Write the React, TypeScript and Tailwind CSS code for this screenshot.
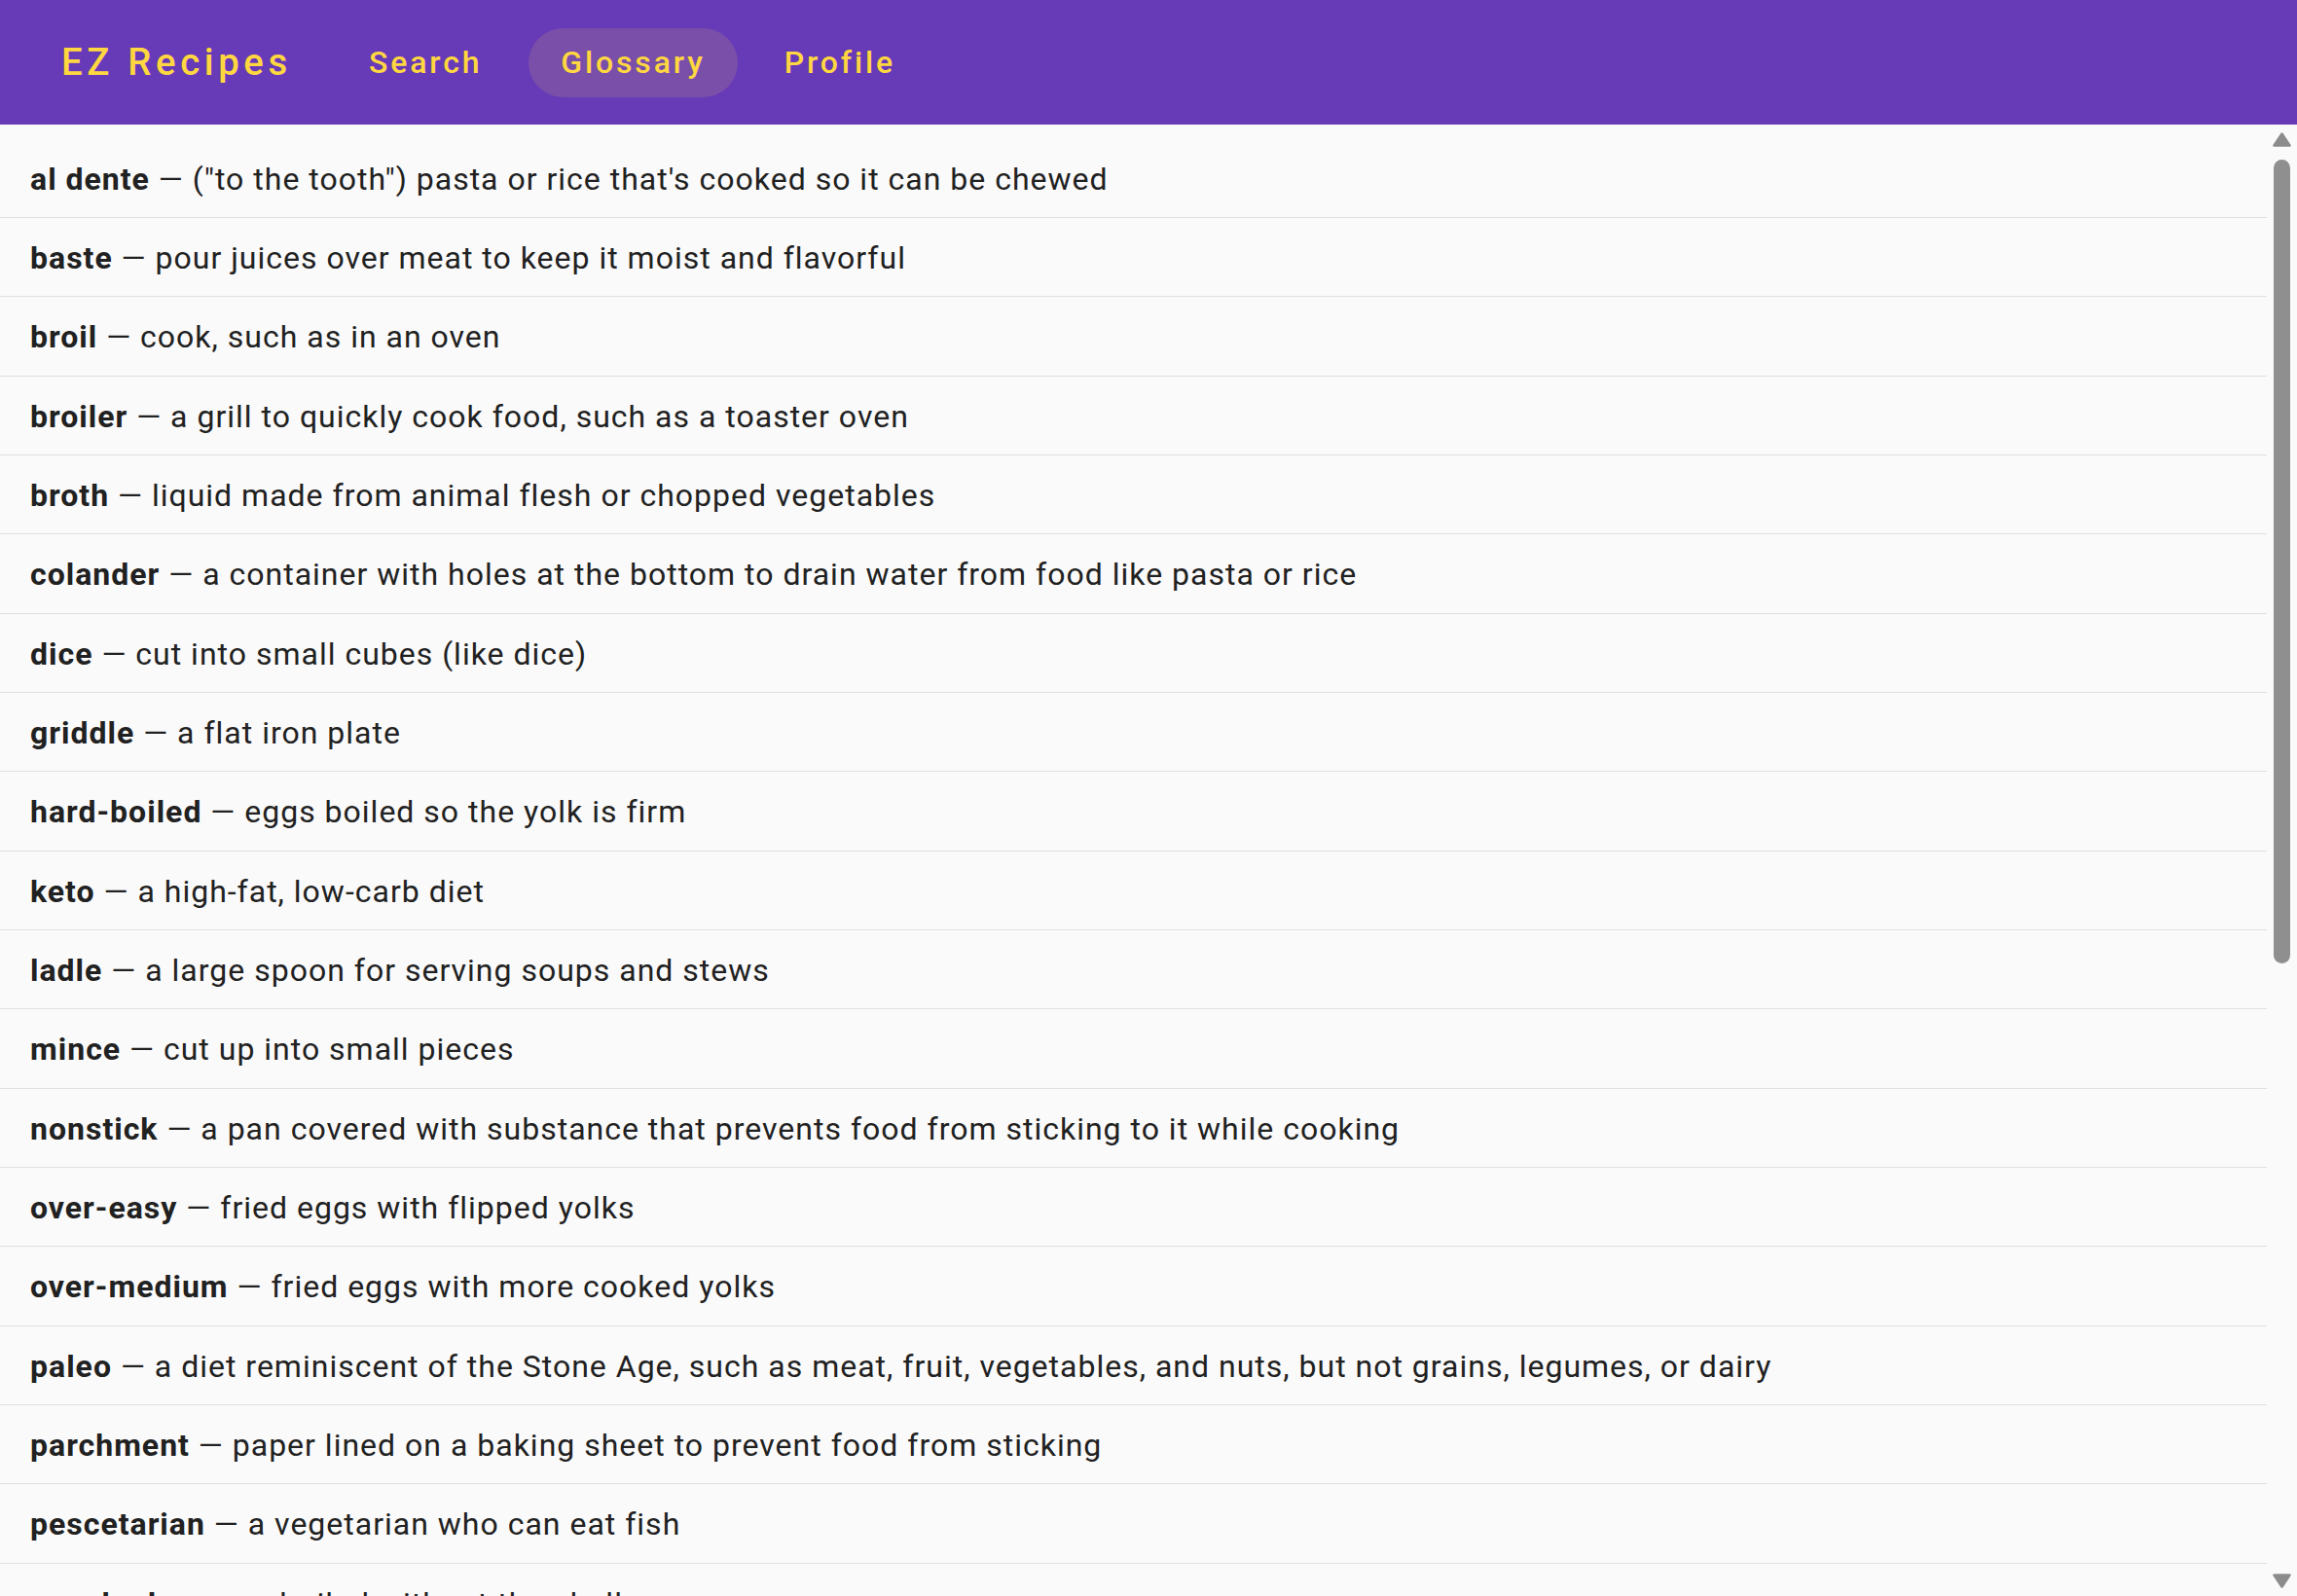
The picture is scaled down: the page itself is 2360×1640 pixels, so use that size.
import React from 'react'

// Glossary screen — purple toolbar, term list, classic scrollbar on the right
const TERMS: [string, string][] = [
  ['al dente', '("to the tooth") pasta or rice that\'s cooked so it can be chewed'],
  ['baste', 'pour juices over meat to keep it moist and flavorful'],
  ['broil', 'cook, such as in an oven'],
  ['broiler', 'a grill to quickly cook food, such as a toaster oven'],
  ['broth', 'liquid made from animal flesh or chopped vegetables'],
  ['colander', 'a container with holes at the bottom to drain water from food like pasta or rice'],
  ['dice', 'cut into small cubes (like dice)'],
  ['griddle', 'a flat iron plate'],
  ['hard-boiled', 'eggs boiled so the yolk is firm'],
  ['keto', 'a high-fat, low-carb diet'],
  ['ladle', 'a large spoon for serving soups and stews'],
  ['mince', 'cut up into small pieces'],
  ['nonstick', 'a pan covered with substance that prevents food from sticking to it while cooking'],
  ['over-easy', 'fried eggs with flipped yolks'],
  ['over-medium', 'fried eggs with more cooked yolks'],
  ['paleo', 'a diet reminiscent of the Stone Age, such as meat, fruit, vegetables, and nuts, but not grains, legumes, or dairy'],
  ['parchment', 'paper lined on a baking sheet to prevent food from sticking'],
  ['pescetarian', 'a vegetarian who can eat fish'],
  ['poached', 'eggs boiled without the shell'],
  ['sauté', 'fry quickly in a little hot fat'],
]

const NAV = ['Search', 'Glossary', 'Profile']

function Arrow({ down = false }: { down?: boolean }) {
  return (
    <svg width="19" height="15" viewBox="0 0 19 15" className="shrink-0">
      <path
        d={down ? 'M1.5 1.5 H17.5 L9.5 13.5 Z' : 'M9.5 1.5 L17.5 13.5 H1.5 Z'}
        fill="#8c8c8c"
        stroke="#8c8c8c"
        strokeWidth="2.5"
        strokeLinejoin="round"
      />
    </svg>
  )
}

export default function App() {
  return (
    <div className="h-screen flex flex-col bg-[#fafafa] font-['Roboto',sans-serif] overflow-hidden">
      {/* Toolbar */}
      <header className="h-[128px] shrink-0 bg-[#673ab7] flex items-center pl-[63px]">
        <span className="text-[38.4px] font-medium tracking-[0.12em] text-[#ffd740] leading-none">
          EZ Recipes
        </span>
        <nav className="flex items-center gap-[15px] ml-[46px]">
          {NAV.map((n) => (
            <a
              key={n}
              className={
                'h-[71px] px-[33px] rounded-full flex items-center text-[32px] font-medium tracking-[0.0893em] text-[#ffd740] leading-none ' +
                (n === 'Glossary' ? 'bg-[#7a4faa]' : '')
              }
            >
              {n}
            </a>
          ))}
        </nav>
      </header>

      <div className="flex-1 flex min-h-0">
        {/* Term list */}
        <ul className="flex-1 min-w-0 pt-[14.67px] overflow-hidden">
          {TERMS.map(([term, def]) => (
            <li
              key={term}
              className="h-[81.33px] flex items-center pl-[31px] pt-[2px] border-b-[1.33px] border-[#e0e0e0] text-[32px] text-[#212121] tracking-[0.03125em] whitespace-nowrap"
            >
              <span className="font-bold">{term}</span>
              <span>&nbsp;— {def}</span>
            </li>
          ))}
        </ul>

        {/* Scrollbar */}
        <div className="w-[31px] shrink-0 flex flex-col items-center pt-[8px] pb-[8px]">
          <Arrow />
          <div className="mt-[13px] w-[17px] h-[826px] rounded-full bg-[#8f8f8f]" />
          <div className="flex-1" />
          <Arrow down />
        </div>
      </div>
    </div>
  )
}
